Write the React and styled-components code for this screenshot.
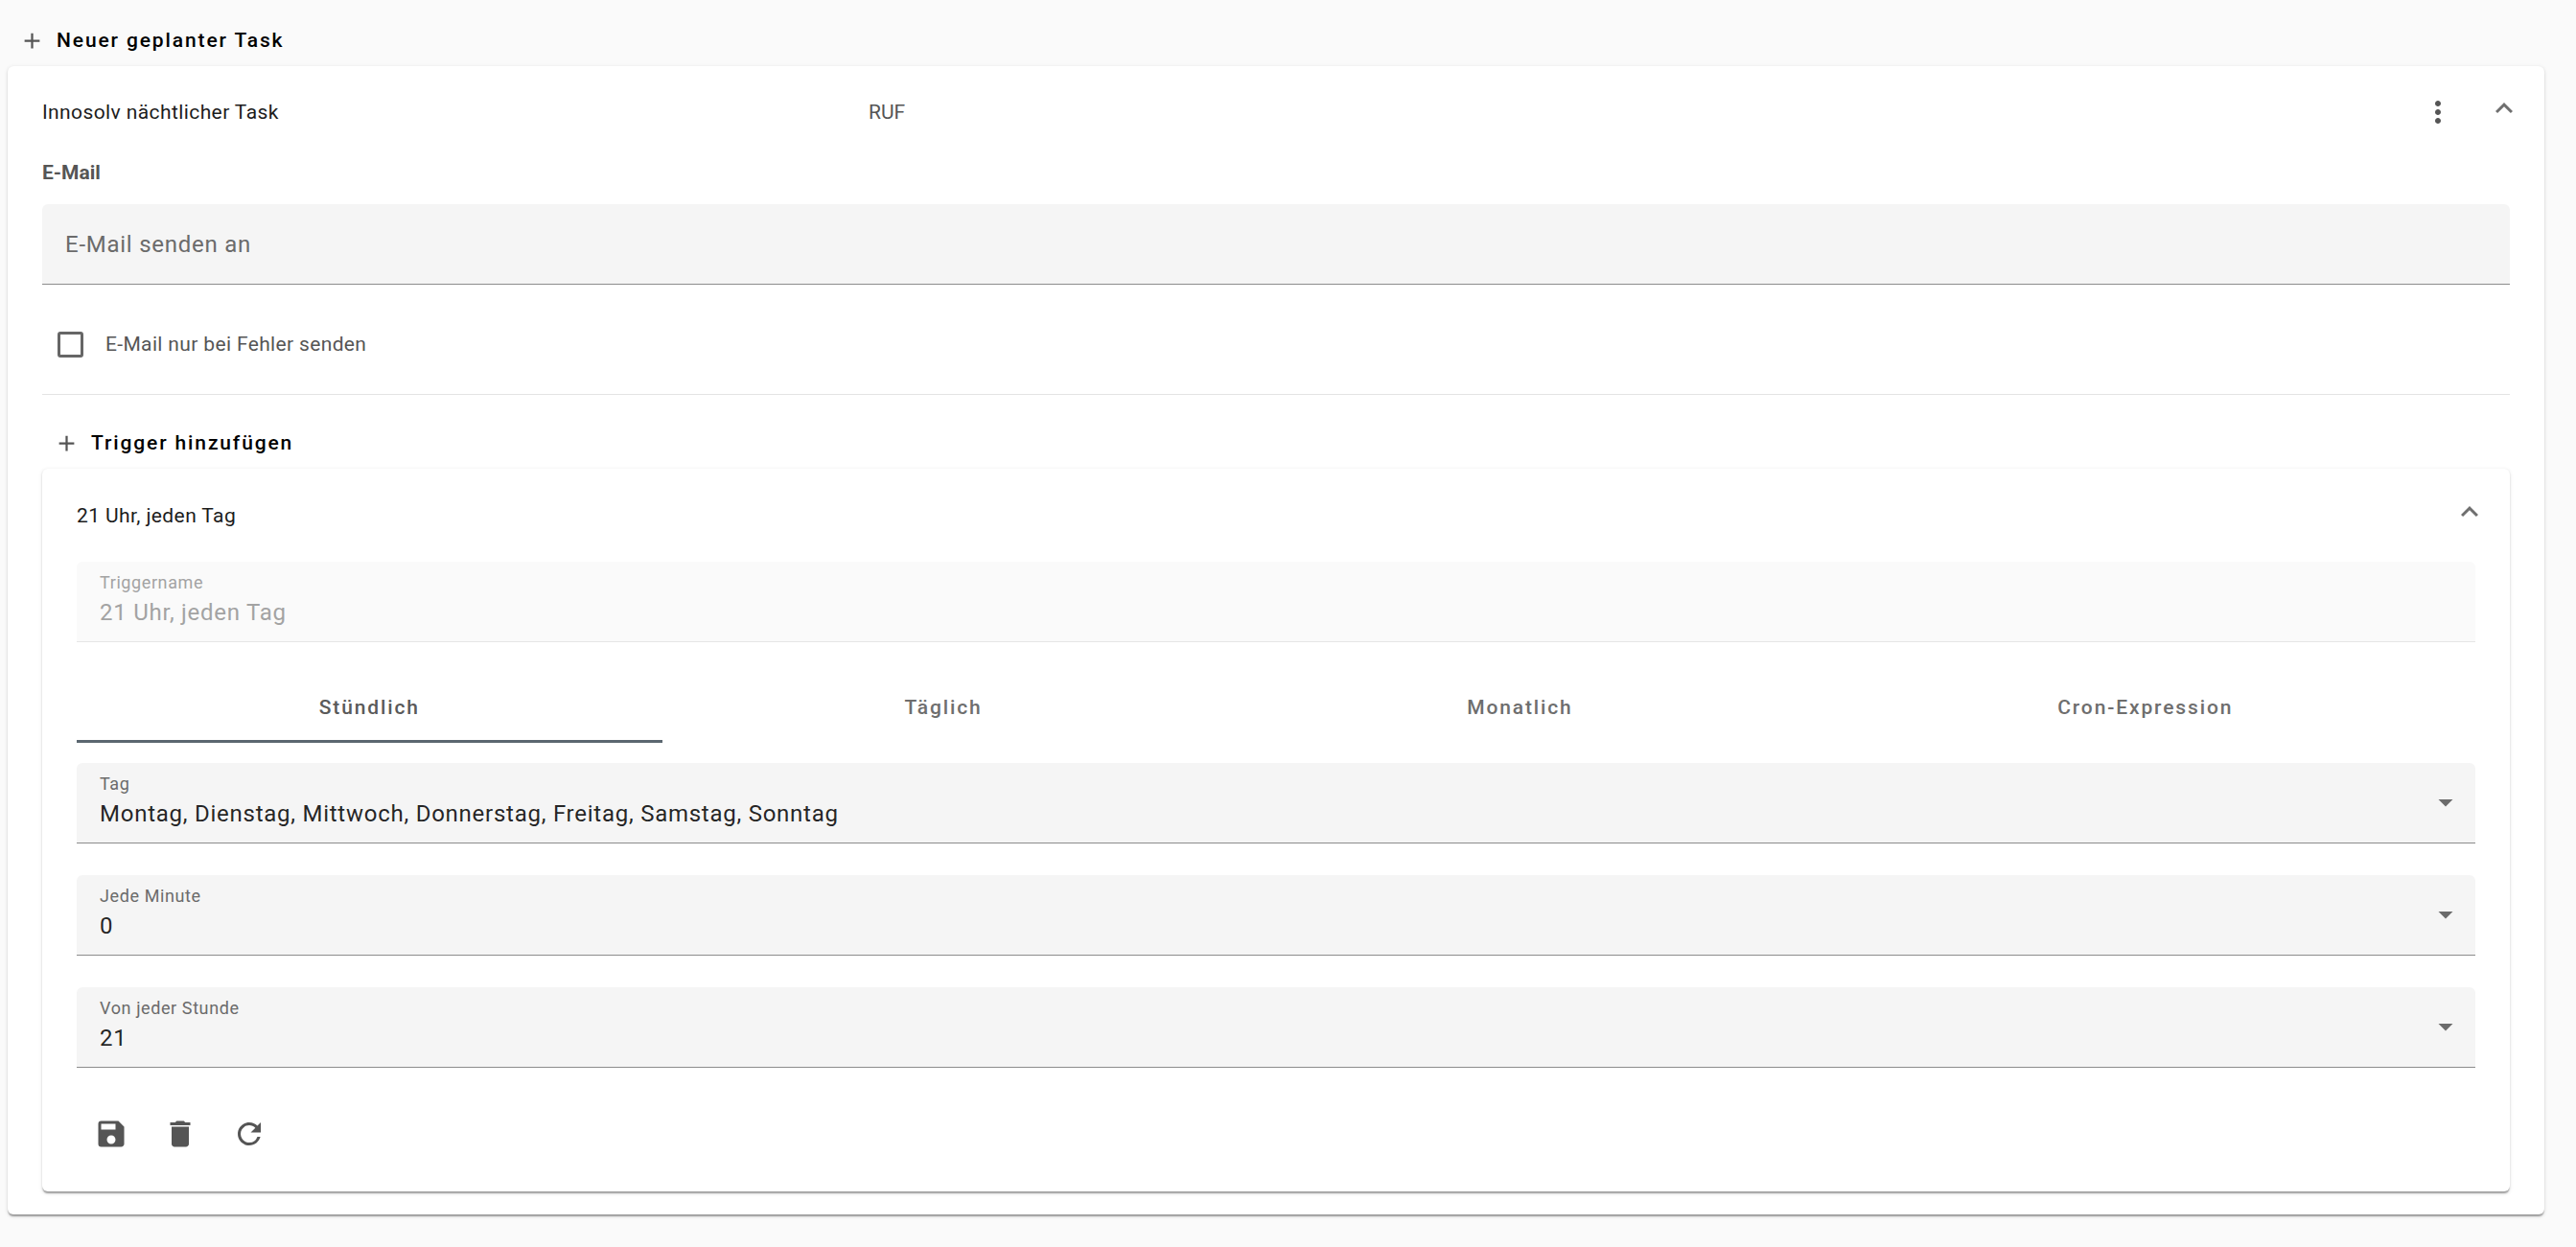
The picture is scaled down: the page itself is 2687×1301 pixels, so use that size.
import styled, { createGlobalStyle } from 'styled-components';
import {
  MdAdd,
  MdMoreVert,
  MdExpandLess,
  MdSave,
  MdDelete,
  MdRefresh,
  MdArrowDropDown,
} from 'react-icons/md';

const GlobalStyle = createGlobalStyle`
  html, body {
    margin: 0;
    background: #fafafa;
    font-family: Roboto, "Liberation Sans", sans-serif;
    -webkit-font-smoothing: antialiased;
  }
`;

const elevation =
  '0 3px 1.5px -1.5px rgba(0,0,0,.2), 0 1.5px 1.5px 0 rgba(0,0,0,.14), 0 1.5px 4.5px 0 rgba(0,0,0,.12)';

const Page = styled.div`
  min-height: 100vh;
  box-sizing: border-box;
  padding: 15px 33px 0 8px;
`;

const TextButton = styled.button`
  display: flex;
  align-items: center;
  gap: 12px;
  height: 54px;
  padding: 0 12px;
  border: 0;
  background: none;
  font: 500 21px/54px Roboto, sans-serif;
  letter-spacing: 1.875px;
  color: #000;
  svg {
    width: 27px;
    height: 27px;
    color: #555;
  }
`;

const Card = styled.section`
  background: #fff;
  border-radius: 6px;
  box-shadow: ${elevation};
  padding-bottom: 24px;
`;

const CardHeader = styled.header`
  display: flex;
  align-items: center;
  height: ${(p) => (p.$inner ? '97px' : '96px')};
  padding: 0 24px 0 36px;
`;

const CardTitle = styled.div`
  width: ${(p) => (p.$inner ? 'auto' : '862px')};
  flex: ${(p) => (p.$inner ? '1' : 'none')};
  font-size: 21px;
  letter-spacing: 0.4px;
  color: #1c1c1c;
`;

const CardMeta = styled.div`
  flex: 1;
  font-size: 21px;
  color: #555;
`;

const HeaderIcons = styled.div`
  display: flex;
  align-items: center;
  gap: 33px;
  color: #555;
  svg {
    display: block;
  }
`;

const Chevron = styled(MdExpandLess)`
  width: 36px;
  height: 36px;
  margin-top: -8px;
  color: #6f6f6f;
`;

const CardBody = styled.div`
  padding: 0 36px;
`;

const SectionLabel = styled.div`
  font-size: 21px;
  font-weight: 700;
  line-height: 30px;
  color: #555;
  margin-bottom: 18px;
`;

const Field = styled.div`
  box-sizing: border-box;
  height: 84px;
  padding: ${(p) => (p.$plain ? '1px 24px 0' : '12px 24px 0')};
  display: flex;
  flex-direction: ${(p) => (p.$plain ? 'row' : 'column')};
  align-items: ${(p) => (p.$plain ? 'center' : 'flex-start')};
  position: relative;
  border-radius: 6px 6px 0 0;
  background: ${(p) => (p.$disabled ? '#fafafa' : '#f5f5f5')};
  border-bottom: 1.5px solid ${(p) => (p.$disabled ? '#e6e6e6' : '#8c8c8c')};
  margin-top: ${(p) => p.$top || 0}px;
`;

const FieldLabel = styled.label`
  font-size: 18px;
  line-height: 20px;
  letter-spacing: 0.6px;
  margin-bottom: 5px;
  color: ${(p) => (p.$disabled ? '#a3a3a3' : '#6b6b6b')};
`;

const FieldValue = styled.div`
  font-size: 24px;
  line-height: 32px;
  letter-spacing: 0.75px;
  color: ${(p) => (p.$muted ? '#6b6b6b' : p.$disabled ? '#a3a3a3' : 'rgba(0,0,0,.87)')};
`;

const Caret = styled(MdArrowDropDown)`
  position: absolute;
  right: 13px;
  top: 23px;
  width: 36px;
  height: 36px;
  color: #6b6b6b;
`;

const CheckRow = styled.label`
  display: flex;
  align-items: center;
  gap: 23px;
  height: 115px;
  padding: 10px 0 0 16px;
  box-sizing: border-box;
  border-bottom: 1.5px solid #e3e3e3;
  font-size: 21px;
  letter-spacing: 0.35px;
  color: #555;
`;

const CheckBox = styled.span`
  box-sizing: border-box;
  width: 27px;
  height: 27px;
  border: 3px solid #666;
  border-radius: 3px;
`;

const TriggerButton = styled(TextButton)`
  margin-top: 23px;
`;

const TabBar = styled.div`
  display: flex;
  height: 72px;
  margin: 33px 0 21px;
`;

const Tab = styled.div`
  flex: 1 1 auto;
  display: flex;
  align-items: center;
  justify-content: center;
  box-sizing: border-box;
  font-size: 21px;
  font-weight: 500;
  letter-spacing: 1.875px;
  color: ${(p) => (p.$active ? '#5a5a5a' : '#6e6e6e')};
  border-bottom: 3px solid ${(p) => (p.$active ? '#5b6770' : 'transparent')};
`;

const Actions = styled.div`
  display: flex;
  margin-top: 33px;
`;

const IconButton = styled.button`
  width: 72px;
  height: 72px;
  padding: 0;
  display: flex;
  align-items: center;
  justify-content: center;
  border: 0;
  background: none;
  color: #555;
  svg {
    width: 36px;
    height: 36px;
  }
`;

const selects = [
  { label: 'Tag', value: 'Montag, Dienstag, Mittwoch, Donnerstag, Freitag, Samstag, Sonntag' },
  { label: 'Jede Minute', value: '0' },
  { label: 'Von jeder Stunde', value: '21' },
];

const tabs = ['Stündlich', 'Täglich', 'Monatlich', 'Cron-Expression'];

export default function App() {
  return (
    <Page>
      <GlobalStyle />
      <TextButton>
        <MdAdd />
        Neuer geplanter Task
      </TextButton>
      <Card>
        <CardHeader>
          <CardTitle>Innosolv nächtlicher Task</CardTitle>
          <CardMeta>RUF</CardMeta>
          <HeaderIcons>
            <MdMoreVert size={36} />
            <Chevron />
          </HeaderIcons>
        </CardHeader>
        <CardBody>
          <SectionLabel>E-Mail</SectionLabel>
          <Field $plain>
            <FieldValue $muted>E-Mail senden an</FieldValue>
          </Field>
          <CheckRow>
            <CheckBox />
            E-Mail nur bei Fehler senden
          </CheckRow>
          <TriggerButton>
            <MdAdd />
            Trigger hinzufügen
          </TriggerButton>
          <Card $inner>
            <CardHeader $inner>
              <CardTitle $inner>21 Uhr, jeden Tag</CardTitle>
              <HeaderIcons>
                <Chevron />
              </HeaderIcons>
            </CardHeader>
            <CardBody>
              <Field $disabled>
                <FieldLabel $disabled>Triggername</FieldLabel>
                <FieldValue $disabled>21 Uhr, jeden Tag</FieldValue>
              </Field>
              <TabBar>
                {tabs.map((t, i) => (
                  <Tab key={t} $active={i === 0}>
                    {t}
                  </Tab>
                ))}
              </TabBar>
              {selects.map((s, i) => (
                <Field key={s.label} $top={i === 0 ? 0 : 33}>
                  <FieldLabel>{s.label}</FieldLabel>
                  <FieldValue>{s.value}</FieldValue>
                  <Caret />
                </Field>
              ))}
              <Actions>
                <IconButton>
                  <MdSave />
                </IconButton>
                <IconButton>
                  <MdDelete />
                </IconButton>
                <IconButton>
                  <MdRefresh />
                </IconButton>
              </Actions>
            </CardBody>
          </Card>
        </CardBody>
      </Card>
    </Page>
  );
}
